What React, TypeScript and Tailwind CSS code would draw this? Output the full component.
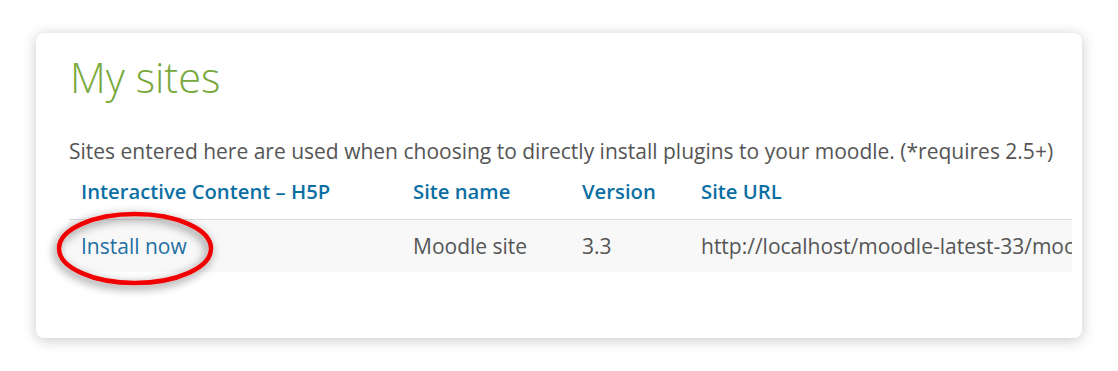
import React from "react";

export default function App() {
  return (
    <div className="w-[1118px] h-[371px] bg-white pt-[33px] pl-[36px]" style={{ fontFamily: '"Open Sans", "Noto Sans", sans-serif' }}>
      <div className="relative w-[1046px] h-[305px] rounded-[8px] bg-white shadow-[0_2px_14px_rgba(0,0,0,0.22)] pl-[33px] pt-[16px]">
        <h1 className="text-[41.5px] leading-[56px] font-light text-[#77a83c] pl-[1px]">My sites</h1>
        <p className="mt-[32px] text-[21px] leading-[28px] text-[#555]">
          Sites entered here are used when choosing to directly install plugins to your moodle. (*requires 2.5+)
        </p>
        <div className="mt-[3px] w-[1003px] overflow-hidden">
          <table className="border-collapse whitespace-nowrap text-[21px]">
            <thead>
              <tr className="text-[#0b6fa4] text-[20.25px]">
                <th className="w-[332px] min-w-[332px] text-left px-[12px] h-[51px] pb-[5px] font-semibold">Interactive Content – H5P</th>
                <th className="w-[169px] min-w-[169px] text-left px-[12px] pb-[5px] font-semibold">Site name</th>
                <th className="w-[119px] min-w-[119px] text-left px-[12px] pb-[5px] font-semibold">Version</th>
                <th className="text-left px-[12px] pb-[5px] font-semibold">Site URL</th>
              </tr>
            </thead>
            <tbody>
              <tr className="bg-[#f8f8f8] border-t border-[#dddddd] text-[#555]">
                <td className="px-[12px] h-[53px] pt-[2px] text-[#1f6fa3]">Install now</td>
                <td className="px-[12px] pt-[2px]">Moodle site</td>
                <td className="px-[12px] pt-[2px]">3.3</td>
                <td className="px-[12px] pt-[2px]">http://localhost/moodle-latest-33/moodle</td>
              </tr>
            </tbody>
          </table>
        </div>
        <svg className="absolute left-[5px] top-[165px] pointer-events-none" width="200" height="110" viewBox="0 0 200 110">
          <defs>
            <filter id="sh" x="-30%" y="-40%" width="160%" height="180%">
              <feDropShadow dx="-2" dy="3" stdDeviation="5" floodColor="#000" floodOpacity="0.55" />
            </filter>
          </defs>
          <ellipse cx="94" cy="50.5" rx="76" ry="34.5" fill="none" stroke="#f00000" strokeWidth="4.5" filter="url(#sh)" />
        </svg>
      </div>
    </div>
  );
}
